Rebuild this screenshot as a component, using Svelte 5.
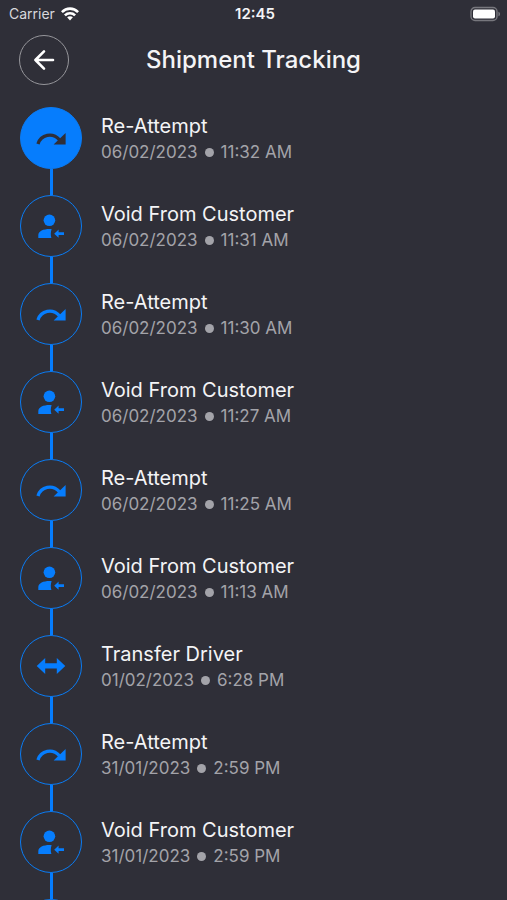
<script lang="ts">
    type Kind = "reattempt" | "void" | "transfer";

    interface TrackingEvent {
        kind: Kind;
        date: string;
        time: string;
    }

    const titles: Record<Kind, string> = {
        reattempt: "Re-Attempt",
        void: "Void From Customer",
        transfer: "Transfer Driver",
    };

    const events: TrackingEvent[] = [
        { kind: "reattempt", date: "06/02/2023", time: "11:32 AM" },
        { kind: "void", date: "06/02/2023", time: "11:31 AM" },
        { kind: "reattempt", date: "06/02/2023", time: "11:30 AM" },
        { kind: "void", date: "06/02/2023", time: "11:27 AM" },
        { kind: "reattempt", date: "06/02/2023", time: "11:25 AM" },
        { kind: "void", date: "06/02/2023", time: "11:13 AM" },
        { kind: "transfer", date: "01/02/2023", time: "6:28 PM" },
        { kind: "reattempt", date: "31/01/2023", time: "2:59 PM" },
        { kind: "void", date: "31/01/2023", time: "2:59 PM" },
    ];
</script>

<div class="screen">
    <div class="status-bar">
        <div class="carrier">
            <span>Carrier</span>
            <svg width="18" height="14" viewBox="0 0 18 14" aria-hidden="true">
                <g fill="none" stroke="#fff" stroke-width="2.6">
                    <path d="M0.9 5.1C5.4 0.5 12.6 0.5 17.1 5.1" />
                    <path d="M3.9 8.3C6.7 5.5 11.3 5.5 14.1 8.3" />
                </g>
                <path d="M6.1 10.3C7.7 8.8 10.3 8.8 11.9 10.3L9 13.4Z" fill="#fff" />
            </svg>
        </div>
        <span class="clock">12:45</span>
        <svg class="battery" width="31" height="16" viewBox="0 0 31 16" aria-hidden="true">
            <rect x="1" y="1.5" width="26" height="13" rx="4" fill="none" stroke="#77777d" stroke-width="1.4" />
            <rect x="3" y="3.5" width="22" height="9" rx="2" fill="#fff" />
            <path d="M28.4 5.7C30.6 6.4 30.6 9.6 28.4 10.3Z" fill="#77777d" />
        </svg>
    </div>

    <header>
        <button class="back" type="button" aria-label="Back">
            <svg width="24" height="24" viewBox="0 0 24 24" aria-hidden="true">
                <path d="M21 12H3.4M12 3.4L3.4 12L12 20.6" fill="none" stroke="#fff" stroke-width="2.6" stroke-linecap="round" stroke-linejoin="round" />
            </svg>
        </button>
        <h1>Shipment Tracking</h1>
    </header>

    <ol class="timeline">
        {#each events as event, i}
            <li>
                <div class="rail">
                    <div class="node" class:current={i === 0}>
                        <svg width="30" height="30" viewBox="0 0 30 30" aria-hidden="true">
                            {#if event.kind === "reattempt"}
                                <path d="M2 20.9C5 11.6 16.5 9 23.5 16.8" fill="none" stroke="currentColor" stroke-width="3.4" />
                                <path d="M29.6 10V21.6H17.6Z" fill="currentColor" />
                            {:else if event.kind === "void"}
                                <g fill="currentColor">
                                    <circle cx="13.4" cy="9.3" r="5.8" />
                                    <path d="M2.3 27V24.2C2.3 20 7.5 18 13.4 18C14.2 18 14.9 18 15.6 18.1C14.7 20.9 14.5 24.3 15.4 27Z" />
                                    <path d="M18.2 22.7L22.6 18.6V21.3H28V24.1H22.6V26.8Z" />
                                </g>
                            {:else}
                                <path d="M0.7 15L9.2 6.9V12.3H20.8V6.9L29.3 15L20.8 23.1V17.5H9.2V23.1Z" fill="currentColor" />
                            {/if}
                        </svg>
                    </div>
                    <div class="line"></div>
                </div>
                <div class="details">
                    <h2>{titles[event.kind]}</h2>
                    <p>
                        <span>{event.date}</span>
                        <span class="dot"></span>
                        <span>{event.time}</span>
                    </p>
                </div>
            </li>
        {/each}
        <li aria-hidden="true">
            <div class="rail">
                <div class="node"></div>
            </div>
        </li>
    </ol>
</div>

<style>
    :global(body) {
        background: #2f2f38;
    }

    .screen {
        display: flex;
        flex-direction: column;
        height: 100vh;
        background: #2f2f38;
        color: #f4f4f6;
        font-family: Inter, "Liberation Sans", sans-serif;
    }

    .status-bar {
        display: grid;
        grid-template-columns: 1fr auto 1fr;
        align-items: center;
        flex: none;
        height: 27px;
        padding: 0 6px 0 9px;
    }

    .carrier {
        display: flex;
        align-items: center;
        gap: 6px;
        color: #d8d8dc;
        font-size: 14px;
    }

    .clock {
        font-size: 15px;
        font-weight: 600;
    }

    .battery {
        justify-self: end;
    }

    header {
        display: grid;
        grid-template-columns: 50px 1fr 50px;
        align-items: center;
        flex: none;
        padding: 8px 19px 22px;
    }

    .back {
        display: flex;
        align-items: center;
        justify-content: center;
        width: 50px;
        height: 50px;
        padding: 0;
        border: 1px solid #96969b;
        border-radius: 50%;
        background: none;
        cursor: pointer;
    }

    h1 {
        margin: 0;
        font-size: 24px;
        font-weight: 500;
        line-height: 30px;
        text-align: center;
    }

    .timeline {
        flex: 1;
        min-height: 0;
        margin: 0;
        padding: 0 20px;
        overflow-y: auto;
        scrollbar-width: none;
        list-style: none;
    }

    li {
        display: flex;
        gap: 19px;
    }

    .rail {
        display: flex;
        flex-direction: column;
        align-items: center;
    }

    .node {
        display: flex;
        align-items: center;
        justify-content: center;
        box-sizing: border-box;
        width: 62px;
        height: 62px;
        border: 1px solid #0a7cf5;
        border-radius: 50%;
        color: #067dfd;
    }

    .node.current {
        background: #067dfd;
        color: #2f2f38;
    }

    .line {
        width: 3px;
        height: 26px;
        background: #067dfd;
    }

    .details {
        padding-top: 6px;
    }

    h2 {
        margin: 0;
        font-size: 20px;
        font-weight: 400;
        line-height: 26px;
    }

    p {
        display: flex;
        align-items: center;
        gap: 7px;
        margin: 0;
        color: #a3a3a9;
        font-size: 17px;
        line-height: 26px;
    }

    .dot {
        width: 9px;
        height: 9px;
        border-radius: 50%;
        background: #a3a3a9;
    }
</style>
